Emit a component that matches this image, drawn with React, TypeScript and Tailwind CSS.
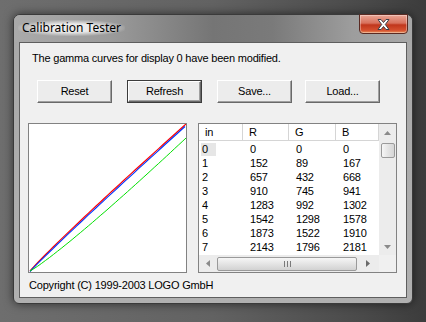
const rows: number[][] = [
  [0, 0, 0, 0],
  [1, 152, 89, 167],
  [2, 657, 432, 668],
  [3, 910, 745, 941],
  [4, 1283, 992, 1302],
  [5, 1542, 1298, 1578],
  [6, 1873, 1522, 1910],
  [7, 2143, 1796, 2181],
];

const cols = [
  { label: "in", w: "w-[44px]" },
  { label: "R", w: "w-[46px]" },
  { label: "G", w: "w-[47px]" },
  { label: "B", w: "w-[43px]" },
];

function curve(x0: number, y0: number, x1: number, y1: number, exp: number) {
  const pts: string[] = [];
  for (let i = 0; i <= 40; i++) {
    const t = i / 40;
    const x = x0 + (x1 - x0) * t;
    const y = y0 + (y1 - y0) * Math.pow(t, exp);
    pts.push(`${x.toFixed(1)},${y.toFixed(1)}`);
  }
  return pts.join(" ");
}

function Button({ label, isDefault, className }: { label: string; isDefault?: boolean; className?: string }) {
  return (
    <div className={`${className ?? ""} ${isDefault ? "border border-[#3c3c3c]" : ""}`}>
      <div
        className={`flex items-center justify-center border-t border-l border-t-white border-l-white border-r border-b border-r-[#696969] border-b-[#696969] bg-[#ececec] shadow-[inset_-1px_-1px_0_#a0a0a0] text-[11px] leading-none text-black ${
          isDefault ? "h-[21px] w-[73px]" : "h-[23px] w-[75px]"
        }`}
      >
        {label}
      </div>
    </div>
  );
}

function ArrowUp() {
  return (
    <svg width="7" height="4" viewBox="0 0 7 4">
      <path d="M0 4 L3.5 0 L7 4 Z" fill="#8a8a8a" />
    </svg>
  );
}
function ArrowDown() {
  return (
    <svg width="7" height="4" viewBox="0 0 7 4">
      <path d="M0 0 L3.5 4 L7 0 Z" fill="#8a8a8a" />
    </svg>
  );
}
function ArrowLeft() {
  return (
    <svg width="4" height="7" viewBox="0 0 4 7">
      <path d="M4 0 L0 3.5 L4 7 Z" fill="#8a8a8a" />
    </svg>
  );
}
function ArrowRight() {
  return (
    <svg width="4" height="7" viewBox="0 0 4 7">
      <path d="M0 0 L4 3.5 L0 7 Z" fill="#6a6a6a" />
    </svg>
  );
}

export default function App() {
  return (
    <div
      className="h-[322px] w-[426px] overflow-hidden bg-[linear-gradient(90deg,#6e6e6e_0%,#626262_50%,#4a4a4a_85%,#3c3c3c_100%)] pl-[13px] pt-[14px] tracking-[-0.2px]"
      style={{ fontFamily: '"Liberation Sans", Arial, sans-serif' }}
    >
      <div className="flex h-[290px] w-[400px] flex-col rounded-t-[7px] rounded-b-[6px] border border-[#3a3a3a] bg-[linear-gradient(180deg,#a8a8a8,#b0b0b0)] px-[5px] pb-[5px] shadow-[0_0_10px_rgba(0,0,0,0.55)]">
        {/* title bar */}
        <div className="-mx-[5px] flex h-[27px] items-start justify-between rounded-t-[6px] bg-[linear-gradient(90deg,#aaaaaa_0%,#9a9a9a_25%,#757575_50%,#7a7a7a_65%,#9d9d9d_85%,#a8a8a8_100%)] pl-[4px] pr-[4px]">
          <span
            className="mt-[5px] rounded-full bg-[radial-gradient(ellipse_at_center,rgba(255,255,255,0.8)_35%,rgba(255,255,255,0)_75%)] px-[4px] text-[12px] leading-[16px] tracking-normal text-black"
            style={{ fontFamily: '"Noto Sans", "Open Sans", sans-serif' }}
          >
            Calibration Tester
          </span>
          <div className="-mt-px flex h-[20px] w-[49px] items-center justify-center rounded-b-[4px] border border-[#5a2a22] bg-[linear-gradient(180deg,#e9a595_0%,#d8715c_45%,#c0361c_55%,#d5502f_85%,#e8905a_100%)] shadow-[inset_0_0_0_1px_rgba(255,255,255,0.35)]">
            <svg width="15" height="13" viewBox="0 0 15 13">
              <path
                d="M2 1.5 L5 1.5 L7.5 4.5 L10 1.5 L13 1.5 L9.3 6.5 L13 11.5 L10 11.5 L7.5 8.5 L5 11.5 L2 11.5 L5.7 6.5 Z"
                fill="#ffffff"
                stroke="#3a3f4a"
                strokeWidth="1"
                strokeLinejoin="round"
              />
            </svg>
          </div>
        </div>

        {/* client area */}
        <div className="flex flex-1 flex-col border border-[#5e5e5e] bg-[#f0f0f0]">
          <div className="pl-[12px] pt-[9px] text-[11px] leading-[13px] text-black">
            The gamma curves for display 0 have been modified.
          </div>

          <div className="mt-[15px] flex">
            <Button label="Reset" className="ml-[17px]" />
            <Button label="Refresh" isDefault className="ml-[15px]" />
            <Button label="Save..." className="ml-[15px]" />
            <Button label="Load..." className="ml-[13px]" />
          </div>

          <div className="mt-[20px] flex">
            {/* graph */}
            <div className="ml-[8px] h-[150px] w-[159px] border border-[#828282] bg-white">
              <svg width="157" height="148" viewBox="0 0 157 148">
                <polyline points={curve(1, 147, 157, 0, 0.95)} fill="none" stroke="#ff0000" strokeWidth="1.2" />
                <polyline points={curve(1, 147.5, 156, 2.5, 0.965)} fill="none" stroke="#0033ff" strokeWidth="1.1" />
                <polyline points={curve(1, 147, 157, 14, 1.1)} fill="none" stroke="#00e000" strokeWidth="1" />
              </svg>
            </div>

            {/* table */}
            <div className="ml-[11px] flex h-[150px] w-[199px] flex-col border border-[#828282] bg-white text-[11px] text-black">
              <div className="flex h-[131px]">
                <div className="flex w-[180px] flex-col">
                  <div className="flex h-[17px] border-b border-[#d5d5d5]">
                    {cols.map((c) => (
                      <div key={c.label} className={`${c.w} flex items-center border-r border-[#d5d5d5] pl-[6px] leading-none`}>
                        {c.label}
                      </div>
                    ))}
                  </div>
                  <div className="pt-px">
                    {rows.map((r, i) => (
                      <div key={i} className="flex h-[14px] items-center leading-none">
                        {r.map((v, j) => (
                          <div key={j} className={`${cols[j].w} ${j === 0 ? "pl-[2px]" : "pl-[7px]"}`}>
                            {j === 0 ? (
                              <span className={`inline-block w-[15px] pl-[1px] leading-[13px] ${i === 0 ? "bg-[#e6e6e6]" : ""}`}>{v}</span>
                            ) : (
                              v
                            )}
                          </div>
                        ))}
                      </div>
                    ))}
                  </div>
                </div>
                {/* vertical scrollbar */}
                <div className="flex w-[17px] flex-col items-center bg-[#ececec]">
                  <div className="flex h-[17px] w-full items-center justify-center">
                    <ArrowUp />
                  </div>
                  <div className="mt-[2px] h-[15px] w-[14px] rounded-[2px] border border-[#9a9a9a] bg-[linear-gradient(90deg,#f6f6f6,#e4e4e4_50%,#d6d6d6)]" />
                  <div className="flex-1" />
                  <div className="flex h-[17px] w-full items-center justify-center">
                    <ArrowDown />
                  </div>
                </div>
              </div>
              {/* horizontal scrollbar */}
              <div className="flex h-[17px]">
                <div className="flex w-[180px] items-center bg-[#ececec]">
                  <div className="flex h-full w-[17px] items-center justify-center">
                    <ArrowLeft />
                  </div>
                  <div className="ml-px flex h-[14px] w-[140px] items-center justify-center rounded-[2px] border border-[#9a9a9a] bg-[linear-gradient(180deg,#f6f6f6,#e4e4e4_50%,#d2d2d2)]">
                    <div className="flex gap-[2px]">
                      <div className="h-[6px] w-px bg-[#7a7a7a]" />
                      <div className="h-[6px] w-px bg-[#7a7a7a]" />
                      <div className="h-[6px] w-px bg-[#7a7a7a]" />
                    </div>
                  </div>
                  <div className="flex h-full flex-1 items-center justify-center">
                    <ArrowRight />
                  </div>
                </div>
                <div className="w-[17px] bg-[#f0f0f0]" />
              </div>
            </div>
          </div>

          <div className="mt-[6px] pl-[9px] text-[11px] leading-[13px] text-black">
            Copyright (C) 1999-2003 LOGO GmbH
          </div>
        </div>
      </div>
    </div>
  );
}
